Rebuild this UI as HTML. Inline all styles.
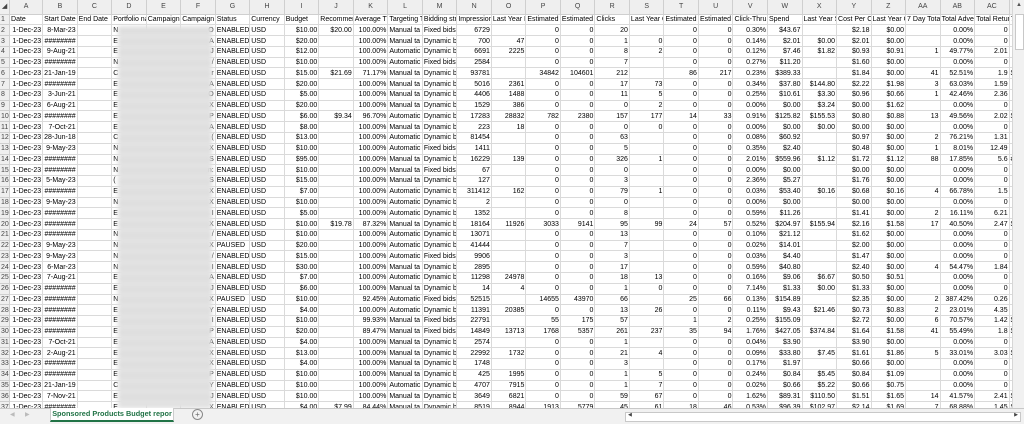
<!DOCTYPE html>
<html><head><meta charset="utf-8">
<style>
html,body{margin:0;padding:0;background:#fff;width:1024px;height:423px;overflow:hidden;font-family:"Liberation Sans",sans-serif;}
#wrap{position:absolute;left:0;top:0;width:1012px;height:408px;overflow:hidden;}
table{border-collapse:separate;border-spacing:0;table-layout:fixed;width:1030px;font-size:7px;color:#000;}
td{padding:0 1px;border-right:1px solid #dadada;border-bottom:1px solid #dadada;white-space:nowrap;overflow:hidden;text-align:right;line-height:9px;height:9.77px;box-sizing:border-box;}
tr{height:10.77px;}
tr.h td{background:#efefef;color:#444;text-align:center;height:14.6px;border-color:#cfcfcf;}
tr.h{height:14.6px;}
td:first-child{background:#efefef;color:#444;text-align:left;padding-left:1px;border-color:#cfcfcf;}
td:nth-child(8),td:nth-child(9),td:nth-child(13),td:nth-child(14),td:nth-child(5){text-align:left;}
tr.t td{text-align:left;}
#blur{position:absolute;left:118px;top:26px;width:94px;height:382px;background:repeating-linear-gradient(180deg,#e4e4e4 0,#dcdcdc 5px,#e6e6e6 10.77px);filter:blur(2px);}
#vs{position:absolute;left:1012px;top:0;width:12px;height:408px;background:#f1f1f1;border-left:1px solid #d6d6d6;}
#vs .th{position:absolute;left:2px;top:14px;width:7px;height:34px;background:#fff;border:1px solid #c8c8c8;}
#tabs{position:absolute;left:0;top:408px;width:1024px;height:15px;background:#f1f1f1;border-top:1px solid #c8c8c8;font-size:7px;}
#tab{position:absolute;left:50px;top:-1px;width:124px;height:14px;background:#fff;border-bottom:2px solid #217346;box-sizing:border-box;color:#217346;font-weight:bold;text-align:center;line-height:12px;font-size:7.3px;border-left:1px solid #ccc;border-right:1px solid #ccc;}
#hs{position:absolute;left:625px;top:3px;width:394px;height:8px;background:#fff;border:1px solid #c8c8c8;}
</style></head><body>
<div id="wrap">
<table>
<colgroup><col style="width:10px"><col style="width:33px"><col span="28" style="width:34.4px"><col style="width:20px"></colgroup>
<tr class="h"><td>◢</td><td>A</td><td>B</td><td>C</td><td>D</td><td>E</td><td>F</td><td>G</td><td>H</td><td>I</td><td>J</td><td>K</td><td>L</td><td>M</td><td>N</td><td>O</td><td>P</td><td>Q</td><td>R</td><td>S</td><td>T</td><td>U</td><td>V</td><td>W</td><td>X</td><td>Y</td><td>Z</td><td>AA</td><td>AB</td><td>AC</td><td>AD</td></tr>
<tr class="t"><td>1</td><td>Date</td><td>Start Date</td><td>End Date</td><td>Portfolio name</td><td>Campaign Name</td><td>Campaign ID</td><td>Status</td><td>Currency</td><td>Budget</td><td>Recommended</td><td>Average Time</td><td>Targeting Type</td><td>Bidding strategy</td><td>Impressions</td><td>Last Year Impr</td><td>Estimated Missed</td><td>Estimated Missed</td><td>Clicks</td><td>Last Year Clicks</td><td>Estimated Missed</td><td>Estimated Missed</td><td>Click-Thru Rate</td><td>Spend</td><td>Last Year Spend</td><td>Cost Per Click</td><td>Last Year CPC</td><td>7 Day Total</td><td>Total Advertising</td><td>Total Return</td><td>7 Day</td></tr>
<tr><td>2</td><td>1-Dec-23</td><td>8-Mar-23</td><td></td><td>N</td><td></td><td>O</td><td>ENABLED</td><td>USD</td><td>$10.00</td><td>$20.00</td><td>100.00%</td><td>Manual ta</td><td>Fixed bids</td><td>6729</td><td></td><td>0</td><td>0</td><td>20</td><td></td><td>0</td><td>0</td><td>0.30%</td><td>$43.67</td><td></td><td>$2.18</td><td>$0.00</td><td></td><td>0.00%</td><td>0</td><td></td></tr>
<tr><td>3</td><td>1-Dec-23</td><td>########</td><td></td><td>E</td><td></td><td>A</td><td>ENABLED</td><td>USD</td><td>$20.00</td><td></td><td>100.00%</td><td>Manual ta</td><td>Dynamic b</td><td>700</td><td>47</td><td>0</td><td>0</td><td>1</td><td>0</td><td>0</td><td>0</td><td>0.14%</td><td>$2.01</td><td>$0.00</td><td>$2.01</td><td>$0.00</td><td></td><td>0.00%</td><td>0</td><td></td></tr>
<tr><td>4</td><td>1-Dec-23</td><td>9-Aug-21</td><td></td><td>E</td><td></td><td>J</td><td>ENABLED</td><td>USD</td><td>$12.00</td><td></td><td>100.00%</td><td>Automatic</td><td>Dynamic b</td><td>6691</td><td>2225</td><td>0</td><td>0</td><td>8</td><td>2</td><td>0</td><td>0</td><td>0.12%</td><td>$7.46</td><td>$1.82</td><td>$0.93</td><td>$0.91</td><td>1</td><td>49.77%</td><td>2.01</td><td></td></tr>
<tr><td>5</td><td>1-Dec-23</td><td>########</td><td></td><td>N</td><td></td><td>/</td><td>ENABLED</td><td>USD</td><td>$10.00</td><td></td><td>100.00%</td><td>Automatic</td><td>Fixed bids</td><td>2584</td><td></td><td>0</td><td>0</td><td>7</td><td></td><td>0</td><td>0</td><td>0.27%</td><td>$11.20</td><td></td><td>$1.60</td><td>$0.00</td><td></td><td>0.00%</td><td>0</td><td></td></tr>
<tr><td>6</td><td>1-Dec-23</td><td>21-Jan-19</td><td></td><td>C</td><td></td><td>r</td><td>ENABLED</td><td>USD</td><td>$15.00</td><td>$21.69</td><td>71.17%</td><td>Manual ta</td><td>Dynamic b</td><td>93781</td><td></td><td>34842</td><td>104601</td><td>212</td><td></td><td>86</td><td>217</td><td>0.23%</td><td>$389.33</td><td></td><td>$1.84</td><td>$0.00</td><td>41</td><td>52.51%</td><td>1.9</td><td style="text-align:left">$</td></tr>
<tr><td>7</td><td>1-Dec-23</td><td>########</td><td></td><td>E</td><td></td><td>A</td><td>ENABLED</td><td>USD</td><td>$20.00</td><td></td><td>100.00%</td><td>Manual ta</td><td>Dynamic b</td><td>5016</td><td>2361</td><td>0</td><td>0</td><td>17</td><td>73</td><td>0</td><td>0</td><td>0.34%</td><td>$37.80</td><td>$144.80</td><td>$2.22</td><td>$1.98</td><td>3</td><td>63.03%</td><td>1.59</td><td></td></tr>
<tr><td>8</td><td>1-Dec-23</td><td>3-Jun-21</td><td></td><td>E</td><td></td><td>O</td><td>ENABLED</td><td>USD</td><td>$5.00</td><td></td><td>100.00%</td><td>Manual ta</td><td>Dynamic b</td><td>4406</td><td>1488</td><td>0</td><td>0</td><td>11</td><td>5</td><td>0</td><td>0</td><td>0.25%</td><td>$10.61</td><td>$3.30</td><td>$0.96</td><td>$0.66</td><td>1</td><td>42.46%</td><td>2.36</td><td></td></tr>
<tr><td>9</td><td>1-Dec-23</td><td>6-Aug-21</td><td></td><td>E</td><td></td><td>X</td><td>ENABLED</td><td>USD</td><td>$20.00</td><td></td><td>100.00%</td><td>Manual ta</td><td>Dynamic b</td><td>1529</td><td>386</td><td>0</td><td>0</td><td>0</td><td>2</td><td>0</td><td>0</td><td>0.00%</td><td>$0.00</td><td>$3.24</td><td>$0.00</td><td>$1.62</td><td></td><td>0.00%</td><td>0</td><td></td></tr>
<tr><td>10</td><td>1-Dec-23</td><td>########</td><td></td><td>E</td><td></td><td>P</td><td>ENABLED</td><td>USD</td><td>$6.00</td><td>$9.34</td><td>96.70%</td><td>Automatic</td><td>Dynamic b</td><td>17283</td><td>28832</td><td>782</td><td>2380</td><td>157</td><td>177</td><td>14</td><td>33</td><td>0.91%</td><td>$125.82</td><td>$155.53</td><td>$0.80</td><td>$0.88</td><td>13</td><td>49.56%</td><td>2.02</td><td style="text-align:left">$</td></tr>
<tr><td>11</td><td>1-Dec-23</td><td>7-Oct-21</td><td></td><td>E</td><td></td><td>A</td><td>ENABLED</td><td>USD</td><td>$8.00</td><td></td><td>100.00%</td><td>Manual ta</td><td>Dynamic b</td><td>223</td><td>18</td><td>0</td><td>0</td><td>0</td><td>0</td><td>0</td><td>0</td><td>0.00%</td><td>$0.00</td><td>$0.00</td><td>$0.00</td><td>$0.00</td><td></td><td>0.00%</td><td>0</td><td></td></tr>
<tr><td>12</td><td>1-Dec-23</td><td>28-Jun-18</td><td></td><td>C</td><td></td><td>(</td><td>ENABLED</td><td>USD</td><td>$13.00</td><td></td><td>100.00%</td><td>Automatic</td><td>Dynamic b</td><td>81454</td><td></td><td>0</td><td>0</td><td>63</td><td></td><td>0</td><td>0</td><td>0.08%</td><td>$60.92</td><td></td><td>$0.97</td><td>$0.00</td><td>2</td><td>76.21%</td><td>1.31</td><td></td></tr>
<tr><td>13</td><td>1-Dec-23</td><td>9-May-23</td><td></td><td>N</td><td></td><td>X</td><td>ENABLED</td><td>USD</td><td>$10.00</td><td></td><td>100.00%</td><td>Automatic</td><td>Fixed bids</td><td>1411</td><td></td><td>0</td><td>0</td><td>5</td><td></td><td>0</td><td>0</td><td>0.35%</td><td>$2.40</td><td></td><td>$0.48</td><td>$0.00</td><td>1</td><td>8.01%</td><td>12.49</td><td></td></tr>
<tr><td>14</td><td>1-Dec-23</td><td>########</td><td></td><td>N</td><td></td><td>S</td><td>ENABLED</td><td>USD</td><td>$95.00</td><td></td><td>100.00%</td><td>Manual ta</td><td>Dynamic b</td><td>16229</td><td>139</td><td>0</td><td>0</td><td>326</td><td>1</td><td>0</td><td>0</td><td>2.01%</td><td>$559.96</td><td>$1.12</td><td>$1.72</td><td>$1.12</td><td>88</td><td>17.85%</td><td>5.6</td><td style="text-align:left">##</td></tr>
<tr><td>15</td><td>1-Dec-23</td><td>########</td><td></td><td>N</td><td></td><td>n:</td><td>ENABLED</td><td>USD</td><td>$10.00</td><td></td><td>100.00%</td><td>Manual ta</td><td>Fixed bids</td><td>67</td><td></td><td>0</td><td>0</td><td>0</td><td></td><td>0</td><td>0</td><td>0.00%</td><td>$0.00</td><td></td><td>$0.00</td><td>$0.00</td><td></td><td>0.00%</td><td>0</td><td></td></tr>
<tr><td>16</td><td>1-Dec-23</td><td>5-May-23</td><td></td><td>(</td><td></td><td>S</td><td>ENABLED</td><td>USD</td><td>$15.00</td><td></td><td>100.00%</td><td>Manual ta</td><td>Dynamic b</td><td>127</td><td></td><td>0</td><td>0</td><td>3</td><td></td><td>0</td><td>0</td><td>2.36%</td><td>$5.27</td><td></td><td>$1.76</td><td>$0.00</td><td></td><td>0.00%</td><td>0</td><td></td></tr>
<tr><td>17</td><td>1-Dec-23</td><td>########</td><td></td><td>E</td><td></td><td>X</td><td>ENABLED</td><td>USD</td><td>$7.00</td><td></td><td>100.00%</td><td>Automatic</td><td>Dynamic b</td><td>311412</td><td>162</td><td>0</td><td>0</td><td>79</td><td>1</td><td>0</td><td>0</td><td>0.03%</td><td>$53.40</td><td>$0.16</td><td>$0.68</td><td>$0.16</td><td>4</td><td>66.78%</td><td>1.5</td><td></td></tr>
<tr><td>18</td><td>1-Dec-23</td><td>9-May-23</td><td></td><td>N</td><td></td><td>X</td><td>ENABLED</td><td>USD</td><td>$10.00</td><td></td><td>100.00%</td><td>Automatic</td><td>Dynamic b</td><td>2</td><td></td><td>0</td><td>0</td><td>0</td><td></td><td>0</td><td>0</td><td>0.00%</td><td>$0.00</td><td></td><td>$0.00</td><td>$0.00</td><td></td><td>0.00%</td><td>0</td><td></td></tr>
<tr><td>19</td><td>1-Dec-23</td><td>########</td><td></td><td>E</td><td></td><td>I</td><td>ENABLED</td><td>USD</td><td>$5.00</td><td></td><td>100.00%</td><td>Automatic</td><td>Dynamic b</td><td>1352</td><td></td><td>0</td><td>0</td><td>8</td><td></td><td>0</td><td>0</td><td>0.59%</td><td>$11.26</td><td></td><td>$1.41</td><td>$0.00</td><td>2</td><td>16.11%</td><td>6.21</td><td></td></tr>
<tr><td>20</td><td>1-Dec-23</td><td>########</td><td></td><td>E</td><td></td><td>X</td><td>ENABLED</td><td>USD</td><td>$10.00</td><td>$19.78</td><td>87.32%</td><td>Manual ta</td><td>Dynamic b</td><td>18164</td><td>11926</td><td>3033</td><td>9141</td><td>95</td><td>99</td><td>24</td><td>57</td><td>0.52%</td><td>$204.97</td><td>$155.94</td><td>$2.16</td><td>$1.58</td><td>17</td><td>40.50%</td><td>2.47</td><td style="text-align:left">$</td></tr>
<tr><td>21</td><td>1-Dec-23</td><td>########</td><td></td><td>N</td><td></td><td>/</td><td>ENABLED</td><td>USD</td><td>$10.00</td><td></td><td>100.00%</td><td>Automatic</td><td>Dynamic b</td><td>13071</td><td></td><td>0</td><td>0</td><td>13</td><td></td><td>0</td><td>0</td><td>0.10%</td><td>$21.12</td><td></td><td>$1.62</td><td>$0.00</td><td></td><td>0.00%</td><td>0</td><td></td></tr>
<tr><td>22</td><td>1-Dec-23</td><td>9-May-23</td><td></td><td>N</td><td></td><td>X</td><td>PAUSED</td><td>USD</td><td>$20.00</td><td></td><td>100.00%</td><td>Automatic</td><td>Dynamic b</td><td>41444</td><td></td><td>0</td><td>0</td><td>7</td><td></td><td>0</td><td>0</td><td>0.02%</td><td>$14.01</td><td></td><td>$2.00</td><td>$0.00</td><td></td><td>0.00%</td><td>0</td><td></td></tr>
<tr><td>23</td><td>1-Dec-23</td><td>9-May-23</td><td></td><td>N</td><td></td><td>/</td><td>ENABLED</td><td>USD</td><td>$15.00</td><td></td><td>100.00%</td><td>Automatic</td><td>Fixed bids</td><td>9906</td><td></td><td>0</td><td>0</td><td>3</td><td></td><td>0</td><td>0</td><td>0.03%</td><td>$4.40</td><td></td><td>$1.47</td><td>$0.00</td><td></td><td>0.00%</td><td>0</td><td></td></tr>
<tr><td>24</td><td>1-Dec-23</td><td>6-Mar-23</td><td></td><td>N</td><td></td><td>I</td><td>ENABLED</td><td>USD</td><td>$30.00</td><td></td><td>100.00%</td><td>Manual ta</td><td>Dynamic b</td><td>2895</td><td></td><td>0</td><td>0</td><td>17</td><td></td><td>0</td><td>0</td><td>0.59%</td><td>$40.80</td><td></td><td>$2.40</td><td>$0.00</td><td>4</td><td>54.47%</td><td>1.84</td><td></td></tr>
<tr><td>25</td><td>1-Dec-23</td><td>7-Aug-21</td><td></td><td>E</td><td></td><td>A</td><td>ENABLED</td><td>USD</td><td>$7.00</td><td></td><td>100.00%</td><td>Automatic</td><td>Dynamic b</td><td>11298</td><td>24978</td><td>0</td><td>0</td><td>18</td><td>13</td><td>0</td><td>0</td><td>0.16%</td><td>$9.06</td><td>$6.67</td><td>$0.50</td><td>$0.51</td><td></td><td>0.00%</td><td>0</td><td></td></tr>
<tr><td>26</td><td>1-Dec-23</td><td>########</td><td></td><td>E</td><td></td><td>J</td><td>ENABLED</td><td>USD</td><td>$6.00</td><td></td><td>100.00%</td><td>Manual ta</td><td>Dynamic b</td><td>14</td><td>4</td><td>0</td><td>0</td><td>1</td><td>0</td><td>0</td><td>0</td><td>7.14%</td><td>$1.33</td><td>$0.00</td><td>$1.33</td><td>$0.00</td><td></td><td>0.00%</td><td>0</td><td></td></tr>
<tr><td>27</td><td>1-Dec-23</td><td>########</td><td></td><td>N</td><td></td><td>X</td><td>PAUSED</td><td>USD</td><td>$10.00</td><td></td><td>92.45%</td><td>Automatic</td><td>Fixed bids</td><td>52515</td><td></td><td>14655</td><td>43970</td><td>66</td><td></td><td>25</td><td>66</td><td>0.13%</td><td>$154.89</td><td></td><td>$2.35</td><td>$0.00</td><td>2</td><td>387.42%</td><td>0.26</td><td></td></tr>
<tr><td>28</td><td>1-Dec-23</td><td>########</td><td></td><td>E</td><td></td><td>Y</td><td>ENABLED</td><td>USD</td><td>$4.00</td><td></td><td>100.00%</td><td>Automatic</td><td>Dynamic b</td><td>11391</td><td>20385</td><td>0</td><td>0</td><td>13</td><td>26</td><td>0</td><td>0</td><td>0.11%</td><td>$9.43</td><td>$21.46</td><td>$0.73</td><td>$0.83</td><td>2</td><td>23.01%</td><td>4.35</td><td></td></tr>
<tr><td>29</td><td>1-Dec-23</td><td>########</td><td></td><td>E</td><td></td><td>I</td><td>ENABLED</td><td>USD</td><td>$10.00</td><td></td><td>99.93%</td><td>Manual ta</td><td>Fixed bids</td><td>22791</td><td></td><td>55</td><td>175</td><td>57</td><td></td><td>1</td><td>2</td><td>0.25%</td><td>$155.09</td><td></td><td>$2.72</td><td>$0.00</td><td>6</td><td>70.57%</td><td>1.42</td><td style="text-align:left">$</td></tr>
<tr><td>30</td><td>1-Dec-23</td><td>########</td><td></td><td>E</td><td></td><td>P</td><td>ENABLED</td><td>USD</td><td>$20.00</td><td></td><td>89.47%</td><td>Manual ta</td><td>Fixed bids</td><td>14849</td><td>13713</td><td>1768</td><td>5357</td><td>261</td><td>237</td><td>35</td><td>94</td><td>1.76%</td><td>$427.05</td><td>$374.84</td><td>$1.64</td><td>$1.58</td><td>41</td><td>55.49%</td><td>1.8</td><td style="text-align:left">$</td></tr>
<tr><td>31</td><td>1-Dec-23</td><td>7-Oct-21</td><td></td><td>E</td><td></td><td>A</td><td>ENABLED</td><td>USD</td><td>$4.00</td><td></td><td>100.00%</td><td>Manual ta</td><td>Dynamic b</td><td>2574</td><td></td><td>0</td><td>0</td><td>1</td><td></td><td>0</td><td>0</td><td>0.04%</td><td>$3.90</td><td></td><td>$3.90</td><td>$0.00</td><td></td><td>0.00%</td><td>0</td><td></td></tr>
<tr><td>32</td><td>1-Dec-23</td><td>2-Aug-21</td><td></td><td>E</td><td></td><td>X</td><td>ENABLED</td><td>USD</td><td>$13.00</td><td></td><td>100.00%</td><td>Manual ta</td><td>Dynamic b</td><td>22992</td><td>1732</td><td>0</td><td>0</td><td>21</td><td>4</td><td>0</td><td>0</td><td>0.09%</td><td>$33.80</td><td>$7.45</td><td>$1.61</td><td>$1.86</td><td>5</td><td>33.01%</td><td>3.03</td><td style="text-align:left">$</td></tr>
<tr><td>33</td><td>1-Dec-23</td><td>########</td><td></td><td>E</td><td></td><td>X</td><td>ENABLED</td><td>USD</td><td>$4.00</td><td></td><td>100.00%</td><td>Manual ta</td><td>Dynamic b</td><td>1748</td><td></td><td>0</td><td>0</td><td>3</td><td></td><td>0</td><td>0</td><td>0.17%</td><td>$1.97</td><td></td><td>$0.66</td><td>$0.00</td><td></td><td>0.00%</td><td>0</td><td></td></tr>
<tr><td>34</td><td>1-Dec-23</td><td>########</td><td></td><td>E</td><td></td><td>P</td><td>ENABLED</td><td>USD</td><td>$10.00</td><td></td><td>100.00%</td><td>Manual ta</td><td>Dynamic b</td><td>425</td><td>1995</td><td>0</td><td>0</td><td>1</td><td>5</td><td>0</td><td>0</td><td>0.24%</td><td>$0.84</td><td>$5.45</td><td>$0.84</td><td>$1.09</td><td></td><td>0.00%</td><td>0</td><td></td></tr>
<tr><td>35</td><td>1-Dec-23</td><td>21-Jan-19</td><td></td><td>C</td><td></td><td>Y</td><td>ENABLED</td><td>USD</td><td>$10.00</td><td></td><td>100.00%</td><td>Automatic</td><td>Dynamic b</td><td>4707</td><td>7915</td><td>0</td><td>0</td><td>1</td><td>7</td><td>0</td><td>0</td><td>0.02%</td><td>$0.66</td><td>$5.22</td><td>$0.66</td><td>$0.75</td><td></td><td>0.00%</td><td>0</td><td></td></tr>
<tr><td>36</td><td>1-Dec-23</td><td>7-Nov-21</td><td></td><td>E</td><td></td><td>J</td><td>ENABLED</td><td>USD</td><td>$10.00</td><td></td><td>100.00%</td><td>Manual ta</td><td>Dynamic b</td><td>3649</td><td>6821</td><td>0</td><td>0</td><td>59</td><td>67</td><td>0</td><td>0</td><td>1.62%</td><td>$89.31</td><td>$110.50</td><td>$1.51</td><td>$1.65</td><td>14</td><td>41.57%</td><td>2.41</td><td style="text-align:left">$</td></tr>
<tr><td>37</td><td>1-Dec-23</td><td>########</td><td></td><td>E</td><td></td><td>X</td><td>ENABLED</td><td>USD</td><td>$4.00</td><td>$7.99</td><td>84.44%</td><td>Manual ta</td><td>Dynamic b</td><td>8519</td><td>8944</td><td>1913</td><td>5779</td><td>45</td><td>61</td><td>18</td><td>46</td><td>0.53%</td><td>$96.39</td><td>$102.97</td><td>$2.14</td><td>$1.69</td><td>7</td><td>68.88%</td><td>1.45</td><td style="text-align:left">$</td></tr>
</table>
<div id="blur"></div>
</div>
<div id="vs"><div style="position:absolute;left:3px;top:2px;font-size:6px;color:#555">▲</div><div class="th"></div></div>
<div id="tabs">
<span style="position:absolute;left:10px;top:2px;color:#bbb;font-size:6px">◀</span>
<span style="position:absolute;left:25px;top:2px;color:#bbb;font-size:6px">▶</span>
<div id="tab">Sponsored Products Budget repor</div>
<span style="position:absolute;left:192px;top:0px;width:9px;height:9px;border:1px solid #888;border-radius:50%;color:#666;font-size:8px;line-height:9px;text-align:center">+</span>
<div id="hs"><span style="position:absolute;left:2px;top:-1px;font-size:5px;color:#444">◀</span><span style="position:absolute;right:2px;top:-1px;font-size:5px;color:#444">▶</span></div>
</div>
</body></html>
